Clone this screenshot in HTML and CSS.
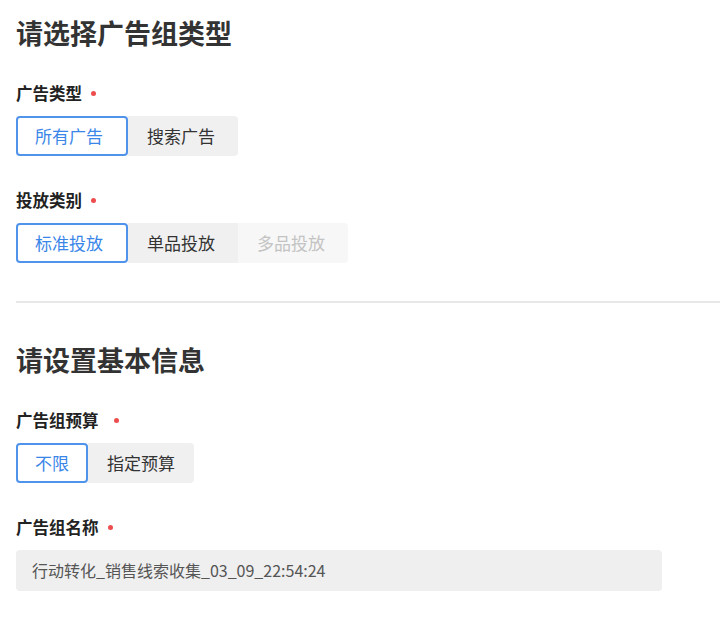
FILE: index.html
```html
<!DOCTYPE html>
<html lang="zh-CN">
<head>
<meta charset="utf-8">
<link rel="stylesheet" href="styles.css">
</head>
<body>
<div class="page">
  <section class="section">
    <h1 class="title">请选择广告组类型</h1>
    <div class="field">
      <div class="label">广告类型<span class="req"></span></div>
      <div class="seg">
        <span class="opt active">所有广告</span>
        <span class="opt">搜索广告</span>
      </div>
    </div>
    <div class="field">
      <div class="label">投放类别<span class="req"></span></div>
      <div class="seg">
        <span class="opt active">标准投放</span>
        <span class="opt">单品投放</span>
        <span class="opt disabled">多品投放</span>
      </div>
    </div>
  </section>
  <hr class="divider">
  <section class="section">
    <h1 class="title">请设置基本信息</h1>
    <div class="field">
      <div class="label">广告组预算<span class="req wide"></span></div>
      <div class="seg compact">
        <span class="opt active">不限</span>
        <span class="opt">指定预算</span>
      </div>
    </div>
    <div class="field">
      <div class="label">广告组名称<span class="req"></span></div>
      <div class="input">行动转化_销售线索收集_03_09_22:54:24</div>
    </div>
  </section>
</div>
</body>
</html>
```
FILE: styles.css
```css
* { box-sizing: border-box; }
html, body { margin: 0; padding: 0; background: #fff; }
body {
  font-family: "Noto Sans CJK SC", "Noto Sans", sans-serif;
  color: #333;
}
.page { padding: 15px 0 0 16px; }
.section { display: flex; flex-direction: column; }
.title {
  margin: 0;
  font-size: 27px;
  line-height: 36px;
  font-weight: 700;
  color: #333;
}
.field { display: flex; flex-direction: column; gap: 12px; margin-top: 31px; }
.section .field + .field { margin-top: 33px; }
.label {
  display: flex;
  align-items: center;
  font-size: 16.5px;
  line-height: 22px;
  font-weight: 700;
  color: #222;
}
.req {
  width: 5px;
  height: 5px;
  border-radius: 50%;
  background: #ee4d4d;
  margin-left: 9px;
}
.req.wide { margin-left: 15px; }
.seg {
  display: flex;
  align-self: flex-start;
  border-radius: 4px;
}
.opt {
  height: 40px;
  line-height: 40px;
  padding: 0 23px 0 19px;
  font-size: 17px;
  color: #333;
  background: #f0f0f0;
}
.seg.compact .opt { padding: 0 19px; }
.opt:first-child { border-radius: 4px 0 0 4px; }
.opt:last-child { border-radius: 0 4px 4px 0; }
.opt.active {
  background: #fff;
  color: #3a86e8;
  border: 2px solid #4f93ea;
  border-radius: 4px;
  line-height: 36px;
  padding: 0 23px 0 17px;
}
.seg.compact .opt.active { padding: 0 17px; }
.opt.disabled { background: #f7f7f7; color: #c3c3c3; }
.divider {
  margin: 38px 0 39px 0;
  border: 0;
  height: 2px;
  background: #e8e8e8;
}
.input {
  width: 646px;
  height: 41px;
  line-height: 41px;
  padding: 0 16px;
  background: #efefef;
  border-radius: 4px;
  font-size: 16px;
  color: #555;
}
```
